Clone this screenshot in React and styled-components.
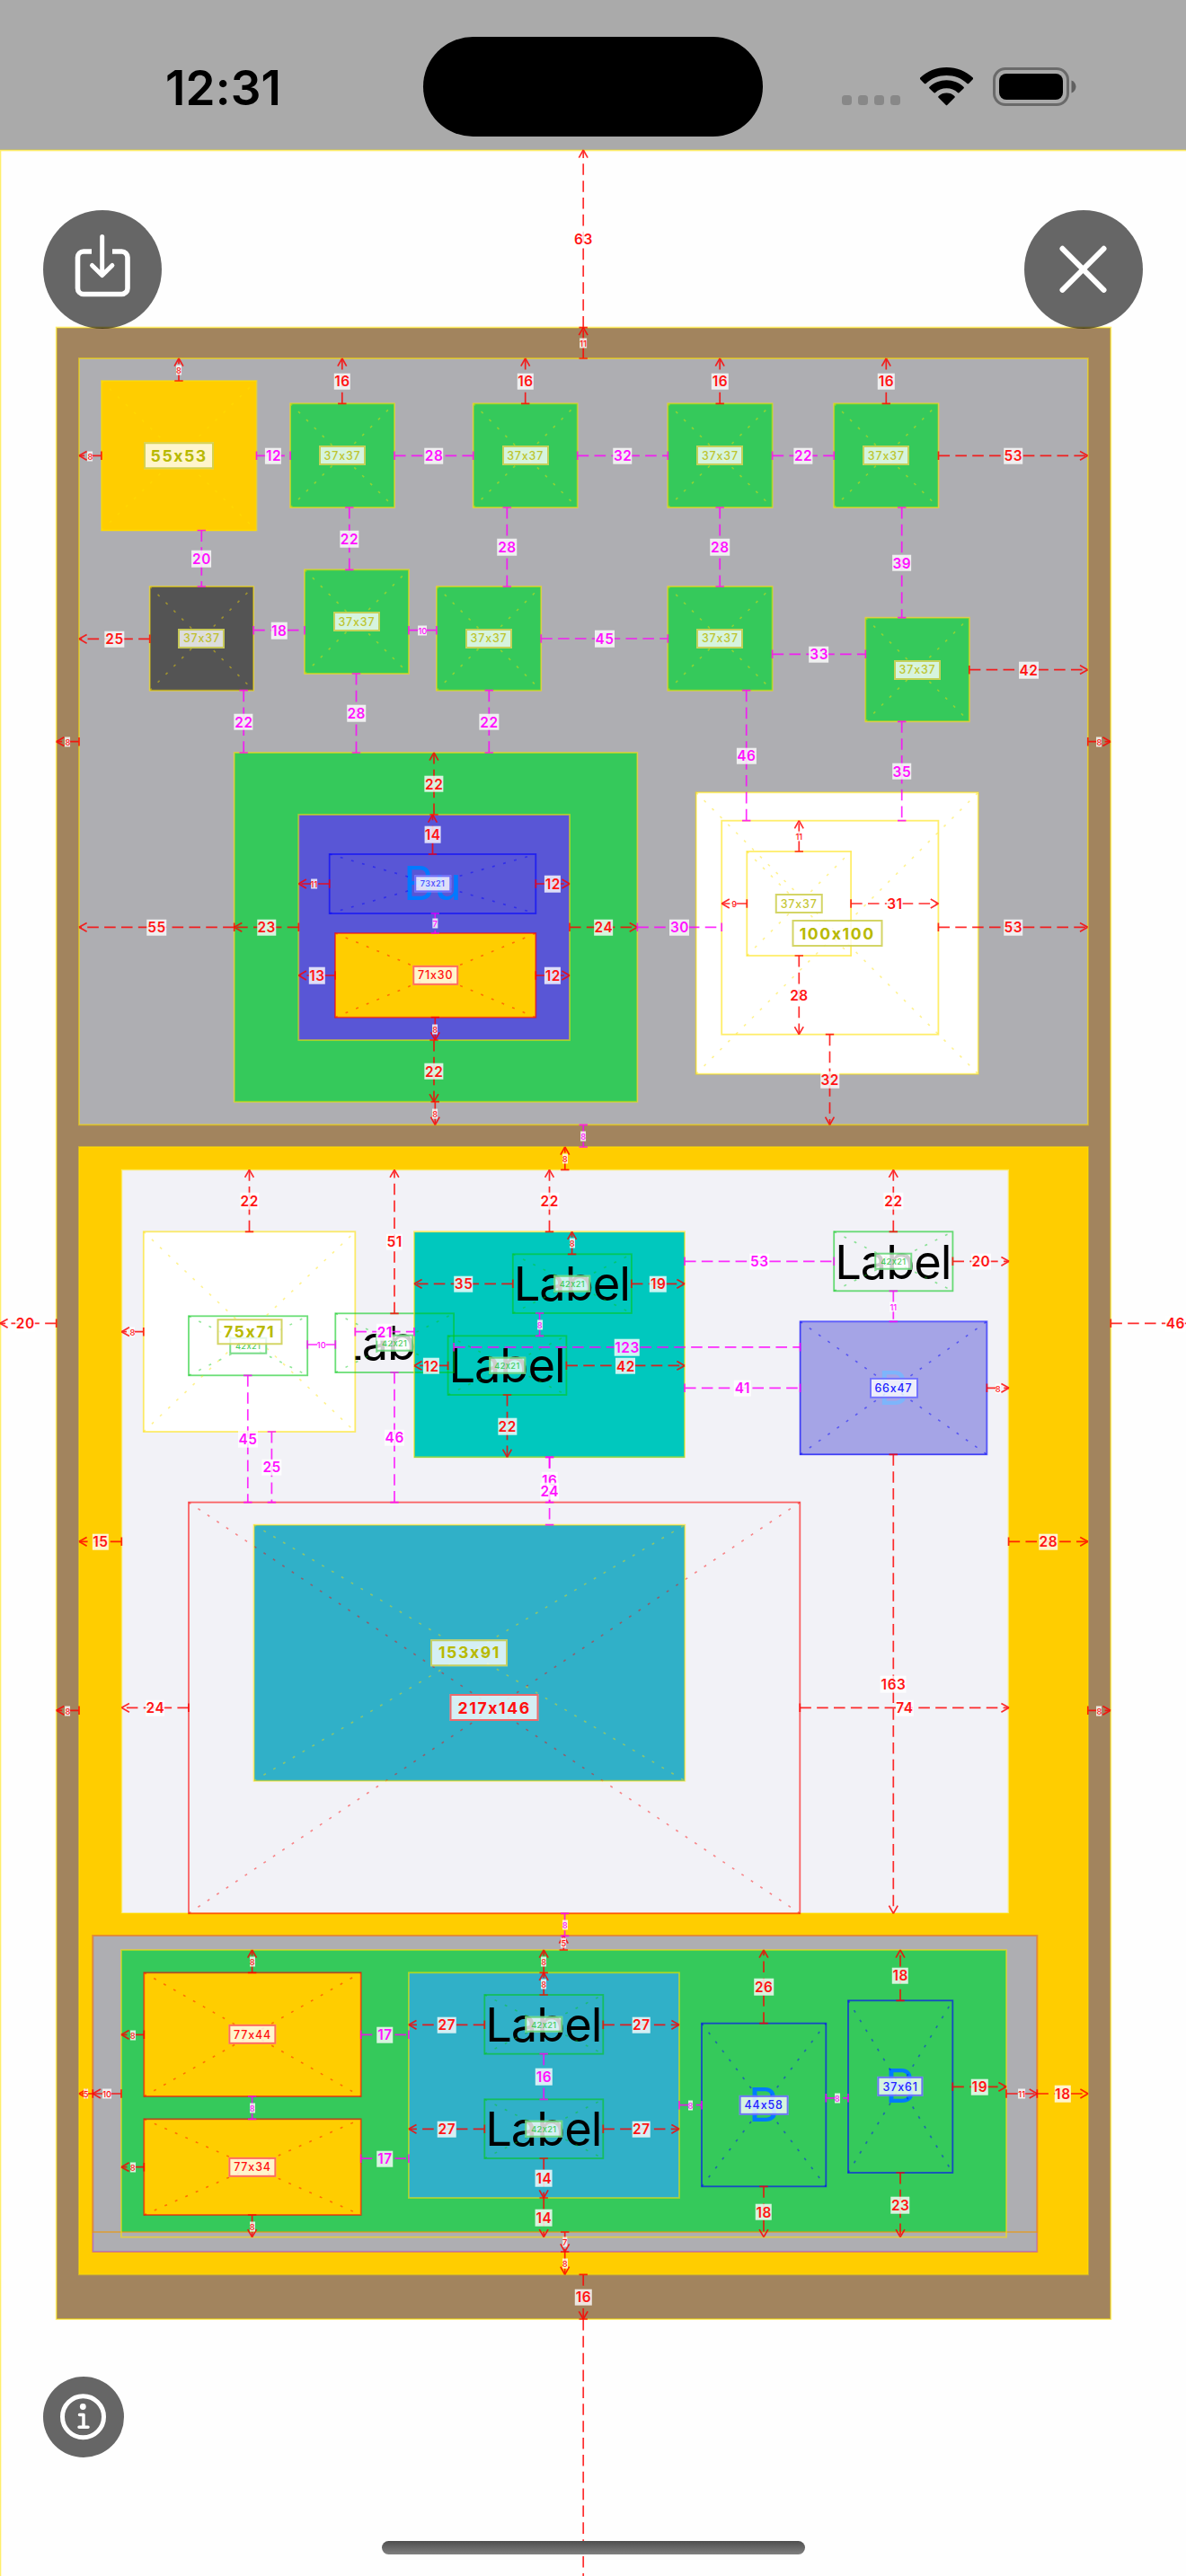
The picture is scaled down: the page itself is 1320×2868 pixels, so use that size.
import React from "react";
import styled, { createGlobalStyle, css } from "styled-components";

const GlobalStyle = createGlobalStyle`
  body { margin: 0; background: #fefefe; }
  #root { font-family: Inter, Roboto, "Liberation Sans", sans-serif; }
`;

const palette = {
  brown: "#a2845e",
  grey: "#aeaeb2",
  green: "#35c95b",
  yellow: "#ffcd00",
  indigo: "#5956d6",
  mint: "#00c8be",
  cyan: "#30b0c8",
  dark: "#545454",
  lavender: "#f2f2f7",
  white: "#ffffff",
  lilac: "#a5a4e6",
};

const tones = {
  yellow: { line: "rgba(255,225,0,.58)", text: "#b8b900" },
  green: { line: "rgba(0,200,20,.58)", text: "#1fc43a" },
  red: { line: "rgba(255,0,0,.6)", text: "#ff1010" },
  blue: { line: "rgba(0,0,255,.62)", text: "#2222ff" },
  orange: { line: "rgba(240,150,0,.6)", text: "#f09600" },
  purple: { line: "rgba(190,60,190,.5)", text: "#b040b0" },
};

/* ---------- screen and status bar ---------- */

const Screen = styled.div`
  position: relative;
  width: 1320px;
  height: 2868px;
  overflow: hidden;
  display: flex;
  flex-direction: column;
  background: #fefefe;
`;

const StatusBar = styled.header`
  display: grid;
  grid-template-columns: 471px 378px 1fr;
  height: 167px;
  background: #aaaaaa;
`;

const Clock = styled.div`
  padding: 66px 0 0 184px;
  font-size: 53px;
  line-height: 64px;
  font-weight: 600;
  letter-spacing: 0.1px;
  color: #000;
`;

const Island = styled.div`
  height: 111px;
  margin-top: 41px;
  border-radius: 56px;
  background: #000;
`;

const StatusIcons = styled.div`
  display: flex;
  align-items: flex-end;
  height: 43px;
  padding: 75px 0 0 88px;
`;

const Signal = styled.div`
  display: flex;
  gap: 7px;
  padding-bottom: 1px;
  margin-right: 22px;
`;

const SignalDot = styled.i`
  width: 11px;
  height: 11px;
  border-radius: 3.5px;
  background: #888;
`;

const WifiIcon = styled.svg`
  width: 59px;
  height: 43px;
  margin-right: 22px;
`;

const BatteryIcon = styled.svg`
  width: 95px;
  height: 43px;
`;

/* ---------- inspected view hierarchy ---------- */

const Stage = styled.main`
  flex: 1;
  padding: 197.5px 0 0 62.8px;
`;

const Board = styled.section`
  box-sizing: border-box;
  width: 1173.4px;
  height: 2217.7px;
  padding: 34.5px 25.2px 0;
  display: flex;
  flex-direction: column;
  gap: 24.7px;
  background: ${palette.brown};
`;

const UpperPanel = styled.section`
  position: relative;
  height: 853.3px;
  background: ${palette.grey};
`;

const LowerPanel = styled.section`
  box-sizing: border-box;
  height: 1255.3px;
  padding: 25.3px 0 0;
  display: flex;
  flex-direction: column;
  gap: 24.7px;
  background: ${palette.yellow};
`;

const Sheet = styled.div`
  position: relative;
  width: 987.3px;
  height: 828px;
  margin-left: 47.3px;
  background: ${palette.lavender};
`;

const Tray = styled.div`
  box-sizing: border-box;
  width: 1051px;
  height: 352px;
  margin-left: 15.3px;
  padding: 16px 0 0 31.7px;
  background: ${palette.grey};
`;

const TrayInner = styled.div`
  position: relative;
  width: 985px;
  height: 314px;
  background: ${palette.green};
`;

const Block = styled.div`
  position: absolute;
  left: ${(p) => p.$x}px;
  top: ${(p) => p.$y}px;
  width: ${(p) => p.$w}px;
  height: ${(p) => p.$h}px;
  overflow: hidden;
  display: flex;
  align-items: center;
  justify-content: center;
  background: ${(p) => p.$fill || "transparent"};
`;

const LabelText = styled.span`
  font-size: 52.5px;
  line-height: 64px;
  letter-spacing: -1.1px;
  margin-right: 1px;
  white-space: nowrap;
  color: #000;
`;

const ButtonText = styled.span`
  font-size: 52px;
  line-height: 64px;
  white-space: nowrap;
  color: ${(p) => (p.$faded ? "#7db5fb" : "#007aff")};
`;

/* A view is [left, top, right, bottom, fill, content] in screen pixels. */
const Views = ({ ox, oy, items }) =>
  items.map(([l, t, r, b, fill, content], i) => (
    <Block key={i} $x={l - ox} $y={t - oy} $w={r - l} $h={b - t} $fill={fill}>
      {content}
    </Block>
  ));

const label = <LabelText>Label</LabelText>;
const { green, yellow, indigo, mint, cyan, dark, white, lilac } = palette;

const upperViews = [
  [112.9, 424, 285.5, 590.5, yellow],
  [323.1, 449.3, 439, 565, green],
  [526.7, 449.3, 642.7, 565, green],
  [743.3, 449.3, 859.6, 565, green],
  [928.2, 449.3, 1044.5, 565, green],
  [166.7, 653, 282.2, 768.7, dark],
  [339, 634.3, 454.9, 750, green],
  [485.9, 653, 602.2, 768.7, green],
  [743.3, 653, 859.6, 768.7, green],
  [963.3, 687.7, 1078.8, 803.3, green],
  [260.7, 838, 709.3, 1226.7, green],
  [332.3, 907, 634, 1158, indigo],
  [366.7, 951, 596.3, 1017, null, <ButtonText key="b">Bu</ButtonText>],
  [373, 1039, 596.3, 1132.7, yellow],
  [774.7, 882.3, 1088.7, 1195.7, white],
];

const sheetViews = [
  [373.3, 1462.3, 505.1, 1528, null, label],
  [159.8, 1371.3, 395.3, 1594, white],
  [461, 1371.3, 762, 1622.3, mint],
  [570.8, 1396.3, 702.9, 1462, null, label],
  [498.6, 1487.3, 630.4, 1553, null, label],
  [928.2, 1371.3, 1060.4, 1437.3, null, label],
  [890.4, 1471.3, 1098.4, 1619.3, lilac, <ButtonText key="b" $faded>B</ButtonText>],
  [282.6, 1697.7, 762.3, 1982.7, cyan],
];

const trayViews = [
  [160.3, 2196.3, 401.7, 2334, yellow],
  [160.3, 2359.3, 401.7, 2466, yellow],
  [454.9, 2196.3, 756, 2447, cyan],
  [539.3, 2221, 671.3, 2286.7, null, label],
  [539.3, 2337.3, 671.3, 2403, null, label],
  [781, 2252.7, 919.3, 2434.3, null, <ButtonText key="b">B</ButtonText>],
  [944, 2227.3, 1060.3, 2419, null, <ButtonText key="b">B</ButtonText>],
];

/* ---------- inspector overlay ---------- */

const Overlay = styled.div`
  position: absolute;
  inset: 0;
  pointer-events: none;
`;

const Drawing = styled.svg`
  position: absolute;
  inset: 0;
  width: 1320px;
  height: 2868px;
`;

const chipSizes = {
  big: css`font-size: 17.6px; font-weight: 700; letter-spacing: 1.6px;`,
  mid: css`font-size: 12.4px; font-weight: 500; letter-spacing: 0.9px;`,
  tiny: css`font-size: 9.2px; font-weight: 500; letter-spacing: 0.4px;`,
};

const SizeChip = styled.div`
  position: absolute;
  left: ${(p) => p.$x}px;
  top: ${(p) => p.$y}px;
  width: ${(p) => p.$w}px;
  height: ${(p) => p.$h}px;
  transform: translate(-50%, -50%);
  box-sizing: border-box;
  display: flex;
  align-items: center;
  justify-content: center;
  color: ${(p) => p.$color};
  background: rgba(255, 255, 255, 0.8);
  white-space: nowrap;
  ${(p) => chipSizes[p.$size]}
  &::before {
    content: "";
    position: absolute;
    inset: 0;
    border: 2px solid currentColor;
    opacity: 0.6;
  }
`;

const ChipText = styled.span`
  opacity: ${(p) => (p.$soft ? 0.8 : 1)};
`;

const NumberChip = styled.div`
  position: absolute;
  left: ${(p) => p.$x}px;
  top: ${(p) => p.$y}px;
  transform: translate(-50%, -50%);
  padding: ${(p) => (p.$small ? "0" : "0 0.3px 0 0.7px")};
  height: ${(p) => (p.$small ? 11 : 18.6)}px;
  display: flex;
  align-items: center;
  font-size: ${(p) => (p.$small ? 9.4 : 15.4)}px;
  font-weight: ${(p) => (p.$small ? 500 : 600)};
  letter-spacing: ${(p) => (p.$small ? 0 : 0.55)}px;
  color: ${(p) => (p.$gap ? "#ff12ff" : "#ff1414")};
  background: rgba(255, 255, 255, 0.8);
`;

/* [left, top, right, bottom, tone, crossed, chip] */
const outlines = [
  [0.4, 167.4, 1380, 2900, "yellow"],
  [62.7, 364.6, 1236.3, 2582, "yellow"],
  [88, 399, 1210.8, 1252.3, "yellow"],
  [88, 1277, 1210.8, 2532.3, "yellow"],
  [112.9, 424, 285.5, 590.5, "yellow", 1, ["55x53", 78, 29.5, "big"]],
  [323.1, 449.3, 439, 565, "yellow", 1, ["37x37", 52, 22, "mid"]],
  [526.7, 449.3, 642.7, 565, "yellow", 1, ["37x37", 52, 22, "mid"]],
  [743.3, 449.3, 859.6, 565, "yellow", 1, ["37x37", 52, 22, "mid"]],
  [928.2, 449.3, 1044.5, 565, "yellow", 1, ["37x37", 52, 22, "mid"]],
  [166.7, 653, 282.2, 768.7, "yellow", 1, ["37x37", 52, 22, "mid"]],
  [339, 634.3, 454.9, 750, "yellow", 1, ["37x37", 52, 22, "mid"]],
  [485.9, 653, 602.2, 768.7, "yellow", 1, ["37x37", 52, 22, "mid"]],
  [743.3, 653, 859.6, 768.7, "yellow", 1, ["37x37", 52, 22, "mid"]],
  [963.3, 687.7, 1078.8, 803.3, "yellow", 1, ["37x37", 52, 22, "mid"]],
  [260.7, 838, 709.3, 1226.7, "yellow"],
  [332.3, 907, 634, 1158, "yellow"],
  [366.7, 951, 596.3, 1017, "blue", 1, ["73x21", 41.5, 19.3, "tiny"]],
  [373, 1039, 596.3, 1132.7, "red", 1, ["71x30", 51.5, 22.3, "mid"]],
  [803.2, 913.7, 1044.4, 1151.7, "yellow"],
  [831.3, 948, 947.1, 1064, "yellow", 1, ["37x37", 52.5, 22, "mid"]],
  [774.7, 882.3, 1088.7, 1195.7, "yellow", 1, ["100x100", 101, 30, "big"]],
  [135.3, 1302.3, 1122.6, 2130.3, "yellow"],
  [210, 1465.3, 342.2, 1531.3, "green", 1, ["42x21", 41.5, 18.6, "tiny"]],
  [159.8, 1371.3, 395.3, 1594, "yellow", 1, ["75x71", 73, 29.5, "big"]],
  [373.3, 1462.3, 505.1, 1528, "green", 1, ["42x21", 41.5, 18.6, "tiny"]],
  [461, 1371.3, 762, 1622.3, "yellow"],
  [570.8, 1396.3, 702.9, 1462, "green", 1, ["42x21", 41.5, 18.6, "tiny"]],
  [498.6, 1487.3, 630.4, 1553, "green", 1, ["42x21", 41.5, 18.6, "tiny"]],
  [928.2, 1371.3, 1060.4, 1437.3, "green", 1, ["42x21", 41.5, 18.6, "tiny"]],
  [890.6, 1471.3, 1098.4, 1619.3, "blue", 1, ["66x47", 54, 22.3, "mid"]],
  [210, 1672.6, 890.3, 2130.3, "red", 1, ["217x146", 99, 30, "big"]],
  [282.6, 1697.7, 762.3, 1982.7, "yellow", 1, ["153x91", 86, 29.5, "big"]],
  [103.3, 2155, 1154.3, 2507, "purple"],
  [103.3, 2155, 1154.3, 2485, "orange"],
  [135, 2171, 1120, 2490.7, "yellow"],
  [160.3, 2196.3, 401.7, 2334, "red", 1, ["77x44", 53.3, 22.3, "mid"]],
  [160.3, 2359.3, 401.7, 2466, "red", 1, ["77x34", 53.3, 22.3, "mid"]],
  [454.9, 2196.3, 756, 2447, "yellow"],
  [539.3, 2221, 671.3, 2286.7, "green", 1, ["42x21", 41.5, 18.6, "tiny"]],
  [539.3, 2337.3, 671.3, 2403, "green", 1, ["42x21", 41.5, 18.6, "tiny"]],
  [781, 2252.7, 919.3, 2434.3, "blue", 1, ["44x58", 54.7, 22.3, "mid"]],
  [944, 2227.3, 1060.3, 2419, "blue", 1, ["37x61", 51.3, 22.3, "mid"]],
];

/* Distance to the parent's edge: [x1, y1, x2, y2, value]; the arrow points at (x2, y2). */
const insets = [
  [649.2, 364.6, 649.2, 167, 63],
  [649.2, 399, 649.2, 364.6, 11],
  [199, 424, 199, 399, 8],
  [112.9, 507.3, 88, 507.3, 8],
  [380.8, 449.3, 380.8, 399, 16],
  [584.7, 449.3, 584.7, 399, 16],
  [801.2, 449.3, 801.2, 399, 16],
  [986.3, 449.3, 986.3, 399, 16],
  [1044.5, 507.3, 1210.6, 507.3, 53],
  [166.7, 711.3, 88, 711.3, 25],
  [1078.8, 745.7, 1210.6, 745.7, 42],
  [88, 825.7, 62.7, 825.7, 8],
  [1210.8, 825.7, 1236, 825.7, 8],
  [483, 907, 483, 838, 22],
  [481.5, 951, 481.5, 907, 14],
  [366.7, 984, 332.3, 984, 11],
  [596.3, 984, 634, 984, 12],
  [332.3, 1032.3, 260.7, 1032.3, 23],
  [634, 1032.3, 709.3, 1032.3, 24],
  [260.7, 1032.3, 88, 1032.3, 55],
  [373, 1086, 332.3, 1086, 13],
  [596.3, 1086, 634, 1086, 12],
  [484.3, 1132.7, 484.3, 1158, 8],
  [483, 1158, 483, 1226.7, 22],
  [484.3, 1226.7, 484.3, 1252.3, 8],
  [889.3, 948, 889.3, 913.7, 11],
  [831.3, 1006, 803.2, 1006, 9],
  [947.1, 1006, 1044.4, 1006, 31],
  [889.3, 1064, 889.3, 1151.7, 28],
  [1044.4, 1032.3, 1210.6, 1032.3, 53],
  [923.5, 1151.7, 923.5, 1252.3, 32],
  [628.8, 1302.3, 628.8, 1277, 8],
  [62.7, 1473.3, 0, 1473.3, 20, 28],
  [1236.3, 1473.3, 1380, 1473.3, 46],
  [277.5, 1371.3, 277.5, 1302.3, 22],
  [439, 1462.3, 439, 1302.3, 51],
  [611.5, 1371.3, 611.5, 1302.3, 22],
  [636.6, 1396.3, 636.6, 1371.3, 8],
  [159.8, 1482.7, 135.3, 1482.7, 8],
  [570.8, 1429.3, 461, 1429.3, 35],
  [702.9, 1429.3, 762, 1429.3, 19],
  [498.6, 1520.4, 461, 1520.4, 12],
  [630.4, 1520.4, 762, 1520.4, 42],
  [564.5, 1553, 564.5, 1622.3, 22],
  [994.3, 1371.3, 994.3, 1302.3, 22],
  [1060.4, 1404.3, 1123, 1404.3, 20],
  [1098.4, 1545.3, 1123, 1545.3, 8],
  [994.3, 1619.3, 994.3, 2130.3, 163],
  [135.3, 1716.3, 88, 1716.3, 15],
  [1122.6, 1716.3, 1210.8, 1716.3, 28],
  [88, 1904.3, 62.7, 1904.3, 8],
  [1210.8, 1904.3, 1236, 1904.3, 8],
  [210, 1901.3, 135.3, 1901.3, 24],
  [890.3, 1901.3, 1123, 1901.3, 74],
  [280.6, 2196.3, 280.6, 2171, 8],
  [160.3, 2265.3, 135, 2265.3, 8],
  [160.3, 2412.7, 135, 2412.7, 8],
  [280.6, 2466, 280.6, 2490.7, 8],
  [135, 2331, 103.3, 2331, 10],
  [103.3, 2331, 88, 2331, 5],
  [627.3, 2171, 627.3, 2155, 5],
  [605.2, 2196.3, 605.2, 2171, 8],
  [605.2, 2221, 605.2, 2196.3, 8],
  [539.3, 2254.3, 454.9, 2254.3, 27],
  [671.3, 2254.3, 756, 2254.3, 27],
  [539.3, 2370.3, 454.9, 2370.3, 27],
  [671.3, 2370.3, 756, 2370.3, 27],
  [605.2, 2403, 605.2, 2447, 14],
  [605.2, 2447, 605.2, 2490.7, 14],
  [628.7, 2485, 628.7, 2507, 7],
  [628.7, 2507, 628.7, 2532.3, 8],
  [649.2, 2532.3, 649.2, 2582, 16],
  [649.2, 2582, 649.2, 3000, ""],
  [850, 2252.7, 850, 2171, 26],
  [1002, 2227.3, 1002, 2171, 18],
  [850, 2434.3, 850, 2490.7, 18],
  [1002, 2419, 1002, 2490.7, 23],
  [1060.3, 2323.3, 1120, 2323.3, 19],
  [1120, 2331, 1154.3, 2331, 11],
  [1154.3, 2331, 1211, 2331, 18],
];

/* Distance between siblings: [x1, y1, x2, y2, value]. */
const gaps = [
  [285.5, 507.3, 323.1, 507.3, 12],
  [439, 507.3, 526.7, 507.3, 28],
  [642.7, 507.3, 743.3, 507.3, 32],
  [859.6, 507.3, 928.2, 507.3, 22],
  [224.3, 590.5, 224.3, 653, 20],
  [388.8, 565, 388.8, 634.3, 22],
  [564.3, 565, 564.3, 653, 28],
  [801.2, 565, 801.2, 653, 28],
  [1003.7, 565, 1003.7, 687.7, 39],
  [282.2, 701.7, 339, 701.7, 18],
  [454.9, 701.7, 485.9, 701.7, 10],
  [602.2, 711, 743.3, 711, 45],
  [859.6, 728.3, 963.3, 728.3, 33],
  [271.2, 768.7, 271.2, 838, 22],
  [396.5, 750, 396.5, 838, 28],
  [544.3, 768.7, 544.3, 838, 22],
  [830.7, 768.7, 830.7, 913.7, 46],
  [1003.7, 803.3, 1003.7, 913.7, 35],
  [484.3, 1017, 484.3, 1039, 7],
  [709.3, 1032.3, 803.2, 1032.3, 30],
  [649.3, 1252.3, 649.3, 1277, 8],
  [342.2, 1497, 373.3, 1497, 10],
  [395.3, 1482.7, 461, 1482.7, 21],
  [600.6, 1462, 600.6, 1487.3, 8],
  [505.1, 1499.8, 890.6, 1499.8, 123],
  [275.8, 1531.3, 275.8, 1672.6, 45],
  [302.4, 1594, 302.4, 1672.6, 25],
  [439, 1528, 439, 1672.6, 46],
  [611.6, 1622.3, 611.6, 1672.6, 16],
  [611.6, 1622.3, 611.6, 1697.7, 24],
  [762, 1404.3, 928.2, 1404.3, 53],
  [994.3, 1437.3, 994.3, 1471.3, 11],
  [762, 1545.3, 890.6, 1545.3, 41],
  [628.6, 2130.3, 628.6, 2155.3, 8],
  [280.6, 2334, 280.6, 2359.3, 8],
  [401.7, 2265.3, 454.9, 2265.3, 17],
  [401.7, 2403.2, 454.9, 2403.2, 17],
  [605.2, 2286.7, 605.2, 2337.3, 16],
  [756, 2343.7, 781, 2343.7, 8],
  [919.3, 2335.8, 944, 2335.8, 8],
];

const Outline = ({ item: [l, t, r, b, tone, crossed] }) => (
  <g stroke={tones[tone].line} fill="none">
    <rect x={l} y={t} width={r - l} height={b - t} strokeWidth="1.8" />
    {crossed && (
      <path
        d={`M${l} ${t}L${r} ${b}M${l} ${b}L${r} ${t}`}
        strokeWidth="1.6"
        strokeDasharray="2.9 9.67"
        opacity=".75"
      />
    )}
  </g>
);

const Measure = ({ item: [x1, y1, x2, y2], gap }) => {
  const dx = Math.sign(x2 - x1);
  const dy = Math.sign(y2 - y1);
  const tick = (x, y) =>
    `M${x - dy * 4.7} ${y - dx * 4.7}L${x + dy * 4.7} ${y + dx * 4.7}`;
  const wing = (side) =>
    `M${x2 - dx * 8.6 + dy * 4.9 * side} ${y2 - dy * 8.6 + dx * 4.9 * side}L${x2} ${y2}`;
  return (
    <g stroke={gap ? "#ff00ff" : "#ff0000"} strokeWidth="1.7" opacity=".82" fill="none">
      <path d={`M${x1} ${y1}L${x2} ${y2}`} strokeDasharray="12.57 6.29" />
      <path d={tick(x1, y1) + (gap ? tick(x2, y2) : wing(1) + wing(-1))} />
    </g>
  );
};

const Numbers = ({ items, gap }) =>
  items
    .filter((m) => m[4] !== "")
    .map(([x1, y1, x2, y2, value, cx], i) => (
      <NumberChip
        key={i}
        $x={cx || (x1 + x2) / 2}
        $y={(y1 + y2) / 2 + 0.4}
        $small={value < 12}
        $gap={gap}
      >
        {value}
      </NumberChip>
    ));

const Inspector = () => (
  <Overlay>
    <Drawing viewBox="0 0 1320 2868">
      {outlines.map((o, i) => (
        <Outline key={i} item={o} />
      ))}
    </Drawing>
    {outlines
      .filter((o) => o[6])
      .map(([l, t, r, b, tone, , [text, w, h, size]], i) => (
        <SizeChip
          key={i}
          $x={(l + r) / 2}
          $y={(t + b) / 2}
          $w={w}
          $h={h}
          $size={size}
          $color={tones[tone].text}
        >
          <ChipText $soft={size === "tiny" || (size === "mid" && tone === "yellow")}>
            {text}
          </ChipText>
        </SizeChip>
      ))}
    <Drawing viewBox="0 0 1320 2868">
      {insets.map((m, i) => (
        <Measure key={i} item={m} />
      ))}
      {gaps.map((m, i) => (
        <Measure key={i} item={m} gap />
      ))}
    </Drawing>
    <Numbers items={insets} />
    <Numbers items={gaps} gap />
  </Overlay>
);

/* ---------- floating controls ---------- */

const RoundButton = styled.button`
  position: absolute;
  left: ${(p) => p.$x}px;
  top: ${(p) => p.$y}px;
  width: ${(p) => p.$size}px;
  height: ${(p) => p.$size}px;
  padding: 0;
  border: 0;
  border-radius: 50%;
  display: flex;
  background: rgba(0, 0, 0, 0.6);

  svg {
    width: 100%;
    height: 100%;
    fill: none;
    stroke: #fff;
    stroke-linecap: round;
    stroke-linejoin: round;
  }
`;

const HomeIndicator = styled.div`
  position: absolute;
  left: 425px;
  top: 2829px;
  width: 471px;
  height: 15px;
  border-radius: 8px;
  background: linear-gradient(#4e4e4e, #808080);
`;

export default function App() {
  return (
    <Screen>
      <GlobalStyle />
      <StatusBar>
        <Clock>12:31</Clock>
        <Island />
        <StatusIcons>
          <Signal>
            <SignalDot />
            <SignalDot />
            <SignalDot />
            <SignalDot />
          </Signal>
          <WifiIcon viewBox="0 0 59 43">
            <path d="M29.5 0C41 0 51.300 4.300 58.800 11.500a1.200 1.200 0 0 1 0 1.800L54.200 17.900a1.300 1.300 0 0 1-1.800 0C46.500 12.300 38.400 9 29.500 9S12.500 12.300 6.600 17.900a1.300 1.300 0 0 1-1.800 0L.2 13.300a1.200 1.200 0 0 1 0-1.800C7.700 4.300 18 0 29.500 0Z" />
            <path d="M29.500 14.300c7.300 0 14 2.800 19 7.400a1.200 1.200 0 0 1 0 1.800l-4.700 4.600a1.300 1.300 0 0 1-1.700.1c-3.400-3-7.800-4.900-12.600-4.900s-9.200 1.900-12.600 4.900a1.300 1.300 0 0 1-1.700-.1l-4.700-4.600a1.200 1.200 0 0 1 0-1.800c5-4.600 11.700-7.400 19-7.400Z" />
            <path d="M29.500 28.600c3.400 0 6.500 1.200 8.900 3.300a1.200 1.200 0 0 1 0 1.800l-8 8a1.200 1.200 0 0 1-1.800 0l-8-8a1.200 1.200 0 0 1 0-1.800c2.400-2.100 5.500-3.300 8.900-3.300Z" />
          </WifiIcon>
          <BatteryIcon viewBox="0 0 95 43">
            <rect x="1.500" y="1.500" width="82" height="40" rx="12.500" fill="none" stroke="#6a6a6a" strokeWidth="3" />
            <rect x="7" y="7" width="71" height="29" rx="8" />
            <path d="M87.500 14.500c3 1 5 3.700 5 7s-2 6-5 7Z" fill="#606060" />
          </BatteryIcon>
        </StatusIcons>
      </StatusBar>

      <Stage>
        <Board>
          <UpperPanel>
            <Views ox={88} oy={399} items={upperViews} />
          </UpperPanel>
          <LowerPanel>
            <Sheet>
              <Views ox={135.3} oy={1302} items={sheetViews} />
            </Sheet>
            <Tray>
              <TrayInner>
                <Views ox={135} oy={2170.7} items={trayViews} />
              </TrayInner>
            </Tray>
          </LowerPanel>
        </Board>
      </Stage>

      <Inspector />

      <RoundButton $x={48} $y={234} $size={132} aria-label="save">
        <svg viewBox="0 0 132 132" strokeWidth="5.6">
          <path d="M54 46H45a6.500 6.500 0 0 0-6.500 6.500v34.500a6.500 6.500 0 0 0 6.500 6.500h42.500a6.500 6.500 0 0 0 6.500-6.500V52.500a6.500 6.500 0 0 0-6.500-6.500H77" strokeLinecap="butt" />
          <path d="M65.700 29.500V72M54.500 61.500 65.700 72.500 76.900 61.500" strokeWidth="5" />
        </svg>
      </RoundButton>
      <RoundButton $x={1140} $y={234} $size={132} aria-label="close">
        <svg viewBox="0 0 132 132" strokeWidth="6">
          <path d="M42.500 42.800 88.500 88.800M88.500 42.800 42.500 88.800" />
        </svg>
      </RoundButton>
      <RoundButton $x={48} $y={2646} $size={90} aria-label="info">
        <svg viewBox="0 0 90 90" strokeWidth="4">
          <circle cx="44.500" cy="44.700" r="23" strokeWidth="5" />
          <circle cx="44.300" cy="33.500" r="3.400" fill="#fff" stroke="none" />
          <path d="M40.500 42.500H45V56M40 56.300H50" strokeWidth="3.500" />
        </svg>
      </RoundButton>
      <HomeIndicator />
    </Screen>
  );
}
